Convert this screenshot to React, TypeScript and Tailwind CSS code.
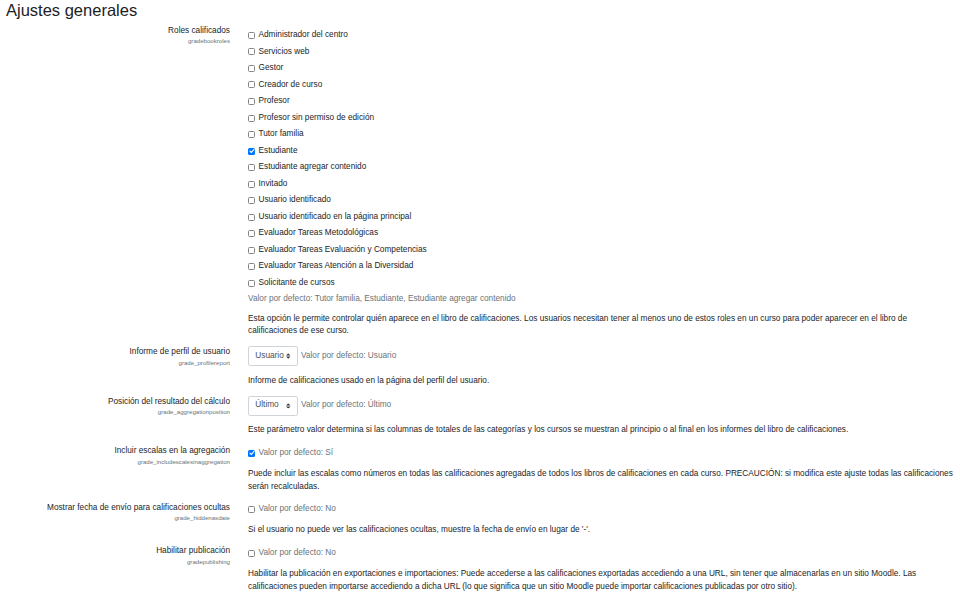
import React from "react";

const roles: { name: string; checked?: boolean }[] = [
  { name: "Administrador del centro" },
  { name: "Servicios web" },
  { name: "Gestor" },
  { name: "Creador de curso" },
  { name: "Profesor" },
  { name: "Profesor sin permiso de edición" },
  { name: "Tutor familia" },
  { name: "Estudiante", checked: true },
  { name: "Estudiante agregar contenido" },
  { name: "Invitado" },
  { name: "Usuario identificado" },
  { name: "Usuario identificado en la página principal" },
  { name: "Evaluador Tareas Metodológicas" },
  { name: "Evaluador Tareas Evaluación y Competencias" },
  { name: "Evaluador Tareas Atención a la Diversidad" },
  { name: "Solicitante de cursos" },
];

function Check({ checked }: { checked?: boolean }) {
  if (checked) {
    return (
      <span className="mr-[3.5px] flex h-[7px] w-[7px] shrink-0 items-center justify-center rounded-[1.5px] bg-[#0075ff]">
        <svg viewBox="0 0 8 8" className="h-[6px] w-[6px]">
          <path d="M1.3 4.2 L3.2 6 L6.7 1.9" fill="none" stroke="#fff" strokeWidth="1.5" strokeLinecap="round" strokeLinejoin="round" />
        </svg>
      </span>
    );
  }
  return <span className="mr-[3.5px] h-[7px] w-[7px] shrink-0 rounded-[1.5px] border border-[#858585] bg-white" />;
}

function Label({ label, code }: { label: string; code: string }) {
  return (
    <div className="w-[230px] shrink-0 text-right">
      <div className="text-[8.25px] leading-[12.66px] text-[#212529]">{label}</div>
      <div className="text-[6.1px] leading-[8.4px] text-[#6a737b]">{code}</div>
    </div>
  );
}

function Select({ value }: { value: string }) {
  return (
    <div className="relative flex h-[20px] w-[50px] shrink-0 items-center rounded-[2.2px] border border-[#ced4da] bg-white pl-[6.3px] text-[8.25px] leading-[12.66px] text-[#495057]">
      {value}
      <svg viewBox="0 0 4 5" className="absolute right-[6.5px] top-1/2 h-[5.6px] w-[4.5px] -translate-y-1/2">
        <path d="M2 0L0 2h4zm0 5L0 3h4z" fill="#343a40" />
      </svg>
    </div>
  );
}

const desc = "text-[8.25px] leading-[12.66px] text-[#212529]";
const gray = "text-[8.25px] leading-[12.66px] text-[#6a737b]";

export default function App() {
  return (
    <div className="h-[596px] w-[960px] overflow-hidden bg-white font-['Liberation_Sans',Arial,sans-serif] text-[#212529]">
      <div className="h-[24.7px] pl-[6px] pt-[1px] text-[16.5px] leading-[19px] text-[#1d2125]">Ajustes generales</div>

      {/* Roles calificados */}
      <div className="mb-[8.44px] flex">
        <Label label="Roles calificados" code="gradebookroles" />
        <div className="ml-[18px] w-[707px] pt-[2.5px]">
          {roles.map((r) => (
            <div key={r.name} className="flex h-[16.53px] items-center">
              <Check checked={r.checked} />
              <span className={desc}>{r.name}</span>
            </div>
          ))}
          <div className={`mt-[2px] ${gray}`}>Valor por defecto: Tutor familia, Estudiante, Estudiante agregar contenido</div>
          <div className={`mt-[6.44px] ${desc}`}>
            Esta opción le permite controlar quién aparece en el libro de calificaciones. Los usuarios necesitan tener al menos uno de estos roles en un curso para poder aparecer en el libro de calificaciones de ese curso.
          </div>
        </div>
      </div>

      {/* Informe de perfil */}
      <div className="mb-[8.44px] flex">
        <Label label="Informe de perfil de usuario" code="grade_profilereport" />
        <div className="ml-[18px] w-[707px]">
          <div className="flex items-center">
            <Select value="Usuario" />
            <span className={`ml-[3px] ${gray}`}>Valor por defecto: Usuario</span>
          </div>
          <div className={`mt-[8.44px] ${desc}`}>Informe de calificaciones usado en la página del perfil del usuario.</div>
        </div>
      </div>

      {/* Posición */}
      <div className="mb-[8.44px] flex">
        <Label label="Posición del resultado del cálculo" code="grade_aggregationposition" />
        <div className="ml-[18px] w-[707px]">
          <div className="flex items-center">
            <Select value="Último" />
            <span className={`ml-[3px] ${gray}`}>Valor por defecto: Último</span>
          </div>
          <div className={`mt-[8.44px] ${desc}`}>
            Este parámetro valor determina si las columnas de totales de las categorías y los cursos se muestran al principio o al final en los informes del libro de calificaciones.
          </div>
        </div>
      </div>

      {/* Incluir escalas */}
      <div className="mb-[8.44px] flex">
        <Label label="Incluir escalas en la agregación" code="grade_includescalesinaggregation" />
        <div className="ml-[18px] w-[707px] pt-[1.5px]">
          <div className="flex items-center">
            <Check checked />
            <span className={gray}>Valor por defecto: Sí</span>
          </div>
          <div className={`mt-[8.44px] ${desc}`}>
            Puede incluir las escalas como números en todas las calificaciones agregadas de todos los libros de calificaciones en cada curso. PRECAUCIÓN: si modifica este ajuste todas las calificaciones serán recalculadas.
          </div>
        </div>
      </div>

      {/* Mostrar fecha */}
      <div className="mb-[8.44px] flex">
        <Label label="Mostrar fecha de envío para calificaciones ocultas" code="grade_hiddenasdate" />
        <div className="ml-[18px] w-[707px] pt-[1.5px]">
          <div className="flex items-center">
            <Check />
            <span className={gray}>Valor por defecto: No</span>
          </div>
          <div className={`mt-[8.44px] ${desc}`}>Si el usuario no puede ver las calificaciones ocultas, muestre la fecha de envío en lugar de '-'.</div>
        </div>
      </div>

      {/* Habilitar publicación */}
      <div className="mb-[8.44px] flex">
        <Label label="Habilitar publicación" code="gradepublishing" />
        <div className="ml-[18px] w-[707px] pt-[1.5px]">
          <div className="flex items-center">
            <Check />
            <span className={gray}>Valor por defecto: No</span>
          </div>
          <div className={`mt-[8.44px] ${desc}`}>
            Habilitar la publicación en exportaciones e importaciones: Puede accederse a las calificaciones exportadas accediendo a una URL, sin tener que almacenarlas en un sitio Moodle. Las calificaciones pueden importarse accediendo a dicha URL (lo que significa que un sitio Moodle puede importar calificaciones publicadas por otro sitio).
          </div>
        </div>
      </div>
    </div>
  );
}
